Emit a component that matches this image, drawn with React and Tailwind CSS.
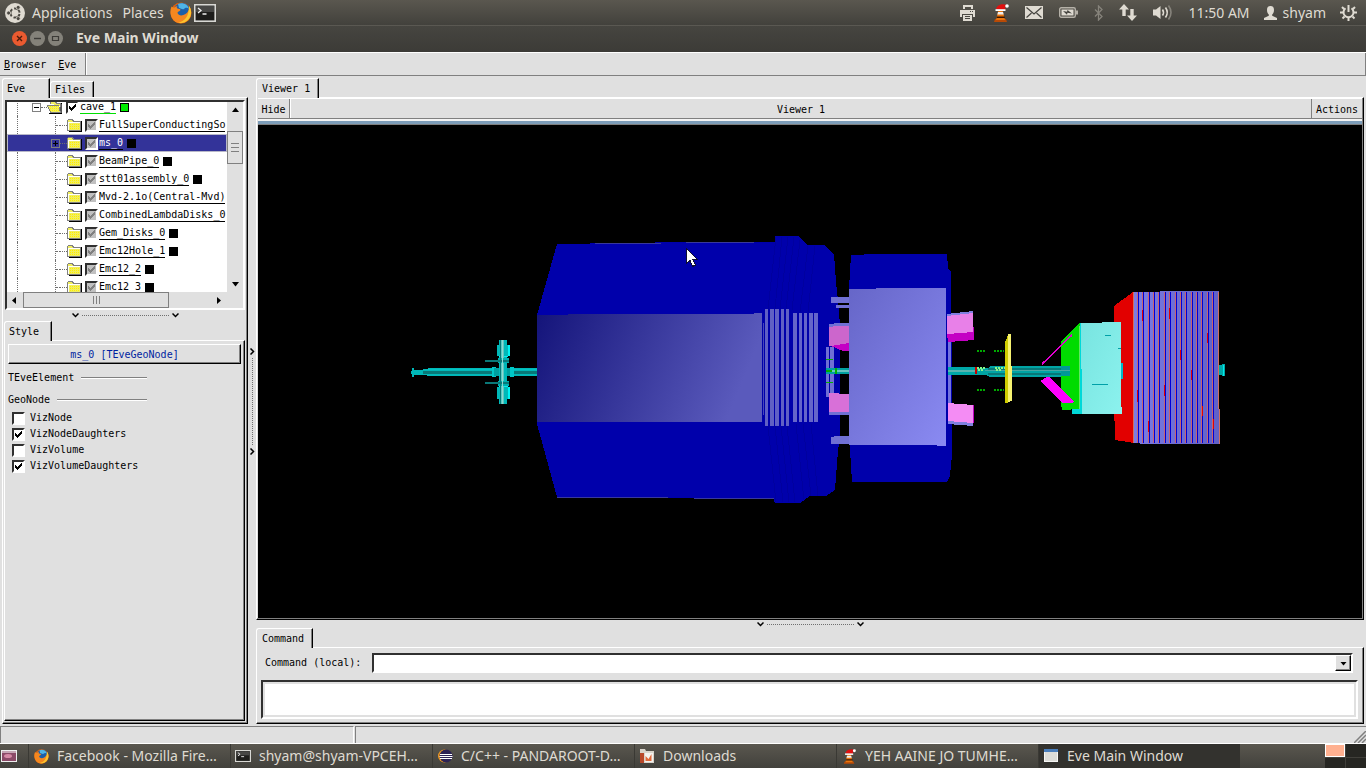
import React from 'react';
import clsx from 'clsx';

const RAISED = 'border border-t-white border-l-white border-r-black border-b-black shadow-[inset_-1px_-1px_0_#808080]';
const SUNKEN = 'border-2 border-t-[#303030] border-l-[#303030] border-r-white border-b-white';

const TREE_NODES = [
    { label: 'FullSuperConductingSo', swatch: false },
    { label: 'ms_0', swatch: true, selected: true },
    { label: 'BeamPipe_0', swatch: true },
    { label: 'stt01assembly_0', swatch: true },
    { label: 'Mvd-2.1o(Central-Mvd)', swatch: false },
    { label: 'CombinedLambdaDisks_0', swatch: false },
    { label: 'Gem_Disks_0', swatch: true },
    { label: 'Emc12Hole_1', swatch: true },
    { label: 'Emc12_2', swatch: true },
    { label: 'Emc12_3', swatch: true },
];

const VIZ_OPTIONS = [
    { label: 'VizNode', checked: false },
    { label: 'VizNodeDaughters', checked: true },
    { label: 'VizVolume', checked: false },
    { label: 'VizVolumeDaughters', checked: true },
];

/* ---------- desktop icons ---------- */

const UbuntuIcon = () => (
    <svg width="20" height="20" viewBox="0 0 20 20">
        <circle cx="10" cy="10" r="10" fill="#dfdbd2" />
        <circle cx="10" cy="10" r="4.6" fill="none" stroke="#4a4842" strokeWidth="2" strokeDasharray="7.6 2" strokeDashoffset="-1" />
        <g fill="#4a4842" stroke="#dfdbd2" strokeWidth="0.8">
            <circle cx="3.6" cy="10" r="2" />
            <circle cx="13.2" cy="4.4" r="2" />
            <circle cx="13.2" cy="15.6" r="2" />
        </g>
    </svg>
);

const FirefoxIcon = ({ size }) => (
    <svg width={size} height={size} viewBox="0 0 22 22">
        <circle cx="11" cy="11" r="10.5" fill="#e0600c" />
        <circle cx="12" cy="9" r="8" fill="#1d5fa8" />
        <path d="M8 2c4-2 10 0 11 5-2-2-4-1-5 0-2 1-3-1-5-1z" fill="#4fb4e6" />
        <path d="M1.5 4.5c1 1 2 1 3 1 1-1 2-1.5 3-1.5-1 1-1 2 0 2.5 1 .5 3 0 3 1.5-1 1.5-3 1.5-3 3 1 3 5 3 8 1 3-2 4-5 3.500-8 3 4 3 10-1 14-5 5-13 4-16-2C0 12 0 8 1.500 4.500z" fill="#f5871f" />
        <path d="M19 4c3 4 3 10-1 14-3 3-7 3.500-10 2.500 7-1 11-6 11-16.500z" fill="#fbc62f" />
    </svg>
);

const TerminalIcon = ({ className }) => (
    <svg className={className} viewBox="0 0 22 18" preserveAspectRatio="none">
        <rect x="0.8" y="0.8" width="20.4" height="16.4" fill="#1d1d1b" stroke="#d8d8d4" strokeWidth="1.6" />
        <rect x="2" y="2" width="18" height="6" fill="#474745" />
        <path d="M4 4l3 2.500-3 2.500M8.500 10h4" fill="none" stroke="#eee" strokeWidth="1.300" />
    </svg>
);

const VlcIcon = ({ width, height }) => (
    <svg width={width} height={height} viewBox="0 0 16 18">
        <path d="M2 15l-1 3h13l-1-3z" fill="#b84a06" />
        <path d="M5.500 6h4l2.500 10H3z" fill="#e8740e" />
        <path d="M5 8h5l.7 2.500H4.300z" fill="#eee" />
        <path d="M4 12.500h7.500l.5 1.500H3.500z" fill="#3b1600" />
        <path d="M3 5c1-4 6-6 11-4l-2 2 .5 3z" fill="#e01010" />
        <path d="M2.500 5.200h10v1.800h-10z" fill="#fff" />
        <circle cx="14" cy="2" r="1.800" fill="#fff" />
    </svg>
);

const PrinterIcon = () => (
    <svg width="18" height="16" viewBox="0 0 18 16" fill="#dfdbd2">
        <path d="M4 0h10v4h-2V2H6v2H4z" />
        <path d="M1 5h15v7h-2V9H3v3H1z" />
        <path d="M4 10h9v6H4zm2 1v1h5v-1zm0 2v1h5v-1z" fillRule="evenodd" />
        <path d="M11 6h1v1h-1zM13 6h1v1h-1z" fill="#45443f" />
    </svg>
);

const MailIcon = () => (
    <svg width="18" height="13" viewBox="0 0 18 13">
        <rect width="18" height="13" fill="#dfdbd2" />
        <path d="M1.500 1.500L9 8l7.500-6.500M1.500 11.500L6.500 7M16.500 11.500L11.500 7" fill="none" stroke="#45443f" strokeWidth="1.200" />
    </svg>
);

const BatteryIcon = () => (
    <svg width="19" height="11" viewBox="0 0 19 11">
        <rect x="0.700" y="0.700" width="15.600" height="9.600" rx="1.500" fill="none" stroke="#b5b1a8" strokeWidth="1.400" />
        <rect x="2.500" y="2.500" width="12" height="6" fill="#dfdbd2" />
        <path d="M17 3.500h2v4h-2z" fill="#b5b1a8" />
        <path d="M4 4l4 .8L8.500 3l4.500 3.500-4.500-.8-.5 2z" fill="#45443f" />
    </svg>
);

const BluetoothIcon = () => (
    <svg width="9" height="16" viewBox="0 0 9 16" fill="none" stroke="#86837b" strokeWidth="1.300">
        <path d="M1 4.500l7 7L4.500 15V1L8 4.500l-7 7" />
    </svg>
);

const NetworkIcon = () => (
    <svg width="18" height="17" viewBox="0 0 18 17" fill="#dfdbd2">
        <path d="M5 0l5 5.500H6.700V12H3.300V5.500H0z" />
        <path d="M13 17l-5-5.500h3.300V5h3.400v6.500H18z" />
    </svg>
);

const VolumeIcon = () => (
    <svg width="20" height="17" viewBox="0 0 20 17" fill="none" strokeWidth="1.600">
        <path d="M0 5.500h3L7.500 2v13L3 11.500H0z" fill="#dfdbd2" />
        <path d="M9.500 5.500q2 3 0 6" stroke="#dfdbd2" />
        <path d="M12.500 3.500q3.500 5 0 10" stroke="#dfdbd2" />
        <path d="M15.500 1.500q5 7 0 14" stroke="#86837b" />
    </svg>
);

const UserIcon = () => (
    <svg width="13" height="14" viewBox="0 0 13 14" fill="#dfdbd2">
        <path d="M6.500 0C9 0 10 1.500 10 4c0 2-.8 3.500-1.800 4.500v1.200L13 12v2H0v-2l4.800-2.300V8.500C3.800 7.500 3 6 3 4c0-2.500 1-4 3.500-4z" />
    </svg>
);

const PowerIcon = () => (
    <svg width="17" height="17" viewBox="0 0 17 17" fill="none" stroke="#dfdbd2">
        <path d="M5.500 4.300a5 5 0 1 0 6 0" strokeWidth="2" />
        <path d="M8.500 1v7" strokeWidth="2" />
        <path d="M2 3l2 2M15 3l-2 2M0 8.500h3M17 8.500h-3M2.500 14.500l2-2M14.500 14.500l-2-2M8.500 14v3" strokeWidth="2" />
    </svg>
);

const EclipseIcon = () => (
    <svg width="15" height="14" viewBox="0 0 15 14">
        <circle cx="6.500" cy="7" r="6.500" fill="#f29a1f" />
        <circle cx="8" cy="7" r="6.500" fill="#2c2255" />
        <path d="M2 5.500h12M1.500 7.500h13M2 9.500h12" stroke="#fff" />
    </svg>
);

const FilesIcon = () => (
    <svg width="16" height="16" viewBox="0 0 16 16">
        <path d="M1 1h5l1 2h8v12H1z" fill="#d9d4cb" />
        <path d="M1 5h4v10H1z" fill="#b8482a" />
        <path d="M6 5h8v9H6z" fill="#f4f2ee" />
        <path d="M6.500 13V8l3 3 3-5v7z" fill="#e0693a" />
    </svg>
);

const WindowIcon = () => (
    <svg width="14" height="14" viewBox="0 0 14 14">
        <rect x="0.500" y="0.500" width="13" height="12" fill="#dcdcd8" stroke="#f6f6f4" />
        <path d="M0 0h14v3H0z" fill="#4a7ebb" />
    </svg>
);

const DesktopIcon = () => (
    <svg width="16" height="12" viewBox="0 0 16 12">
        <rect x="0.500" y="0.500" width="15" height="11" fill="#8c4a68" stroke="#eee" />
        <path d="M1 2h14" stroke="#fff" />
        <ellipse cx="7" cy="6" rx="4" ry="2" fill="#d68aa6" />
    </svg>
);

/* ---------- toolkit widgets ---------- */

const Folder = ({ open }) => (
    <svg width="16" height="14" viewBox="0 0 16 14" shapeRendering="crispEdges" className="shrink-0">
        <path d="M2 14h13V3h-1v10H2z" fill="#000" />
        {open && <path d="M13 4h2v9h-2z" fill="#555" />}
        <path d={open ? 'M3.500 3.500v-2h5l1 2h4v3' : 'M.5 12.500v-10l1-1h4l1 2h7v9z'} fill="#f0ee60" stroke="#808080" />
        {open && <path d="M.5 5.500h11l2 7h-10z" fill="#f0ee60" stroke="#808080" />}
        <path d="M3 6h9M3 8h9M3 10h9" stroke="#ffee00" strokeDasharray="1 1" />
        {!open && <path d="M1.500 12V4.500H13" fill="none" stroke="#fff" />}
    </svg>
);

const TickBox = ({ checked, muted, label }) => (
    <span className="grid shrink-0">
        <input
            type="checkbox"
            aria-label={label}
            defaultChecked={checked}
            className={clsx('peer appearance-none col-start-1 row-start-1 size-[13px]', SUNKEN, muted ? 'bg-[#c0c0c0]' : 'bg-white')}
        />
        <svg
            viewBox="0 0 13 13"
            shapeRendering="crispEdges"
            className="invisible peer-checked:visible pointer-events-none col-start-1 row-start-1 size-[13px]"
        >
            <path d="M3 5h1v1h1v1h1v-1h1v-1h1v-1h1v-1h1v3h-1v1h-1v1h-1v1h-1v1h-1v-1h-1v-1h-1z" fill={muted ? '#808080' : '#000'} />
        </svg>
    </span>
);

const Chevron = ({ right }) => (
    <svg width="7" height="7" viewBox="0 0 7 7" className="shrink-0">
        <path d={right ? 'M1.500 0.500l3 3-3 3' : 'M0.500 1.500l3 3 3-3'} fill="none" stroke="#000" strokeWidth="1.500" />
    </svg>
);

const Splitter = ({ className }) => (
    <div className={clsx('flex items-center justify-center gap-[3px] shrink-0', className)}>
        <Chevron />
        <span className="w-[87px] border-t border-dotted border-[#707070]" />
        <Chevron />
    </div>
);

const Tab = ({ children, active, className }) => (
    <button
        type="button"
        className={clsx(
            'flex items-center bg-[#e0e0e0] border-t border-l border-white border-r border-r-black rounded-tl-[3px] shadow-[inset_-1px_0_0_#808080]',
            active ? 'h-5 -mb-px z-10' : 'h-4',
            className
        )}
    >
        {children}
    </button>
);

const ArrowGlyph = ({ d }) => (
    <svg width="7" height="7" viewBox="0 0 7 7" className="shrink-0">
        <path d={d} fill="#000" />
    </svg>
);

const Expander = ({ plus }) => (
    <svg width="9" height="9" viewBox="0 0 9 9" shapeRendering="crispEdges" className="shrink-0">
        <rect x="0.500" y="0.500" width="8" height="8" fill={plus ? '#333399' : '#fff'} stroke="#808080" />
        <path d={plus ? 'M2 4h5v1H2zM4 2h1v5H4z' : 'M2 4h5v1H2z'} fill="#000" />
    </svg>
);

const TreeRow = ({ node }) => (
    <li className={clsx('flex items-center h-[18px]', node.selected && 'bg-[#333399] text-white outline outline-[#b8b8c8] -outline-offset-1')}>
        <span className={clsx('ml-[10px] w-[34px] h-full shrink-0', !node.selected && 'border-l border-dotted border-[#707070]')} />
        {node.selected ? (
            <Expander plus />
        ) : (
            <span className="ml-1 w-[5px] h-full shrink-0 flex items-center border-l border-dotted border-[#707070]">
                <span className="w-full border-t border-dotted border-[#707070]" />
            </span>
        )}
        <span className="w-[7px] shrink-0 border-t border-dotted border-[#707070]" />
        <Folder />
        <label className="flex items-center ml-[2px] gap-px">
            <TickBox checked muted label={node.label} />
            <span className="pt-px border-b border-black whitespace-nowrap">{node.label}</span>
        </label>
        {node.swatch && <span className="size-[9px] ml-1 bg-black shrink-0" />}
    </li>
);

const GeometryTree = () => (
    <div className={clsx('mt-[2px] mx-[2px] bg-[#e0e0e0]', SUNKEN)}>
        <div className="flex h-[190px]">
            <ul className="flex-1 min-w-0 overflow-hidden bg-white">
                <li className="flex items-center h-[18px] -mt-1">
                    <span className="ml-[10px] w-[15px] h-full border-l border-dotted border-[#707070]" />
                    <Expander />
                    <span className="w-[6px] border-t border-dotted border-[#707070]" />
                    <Folder open />
                    <label className="flex items-center ml-[3px] gap-px">
                        <TickBox checked label="cave_1" />
                        <span className="pt-px border-b border-[#00e000]">cave_1</span>
                    </label>
                    <span className="size-[9px] ml-1 bg-[#00ee00] border border-black" />
                </li>
                {TREE_NODES.map((node) => (
                    <TreeRow key={node.label} node={node} />
                ))}
            </ul>
            <div className="w-4 flex flex-col items-center pt-1 pb-1">
                <ArrowGlyph d="M3.500 1.500L7 6H0z" />
                <div className="mt-[18px] w-full h-[33px] border border-[#808080] flex flex-col items-center justify-center gap-[3px]">
                    <span className="w-2 h-px bg-[#808080]" />
                    <span className="w-2 h-px bg-[#808080]" />
                    <span className="w-2 h-px bg-[#808080]" />
                </div>
                <span className="flex-1" />
                <ArrowGlyph d="M3.500 5.500L7 1H0z" />
            </div>
        </div>
        <div className="flex items-center h-4 pl-1">
            <ArrowGlyph d="M1 3.500L5 0v7z" />
            <div className="ml-[5px] w-[146px] h-full border border-[#808080] flex items-center justify-center gap-[2px]">
                <span className="w-px h-2 bg-[#808080]" />
                <span className="w-px h-2 bg-[#808080]" />
                <span className="w-px h-2 bg-[#808080]" />
            </div>
            <span className="w-[46px]" />
            <ArrowGlyph d="M6 3.500L2 0v7z" />
        </div>
    </div>
);

const GroupTitle = ({ children }) => (
    <div className="flex items-center gap-[7px] w-[139px] h-5">
        <span>{children}</span>
        <span className="flex-1 h-[2px] bg-[#808080] border-b border-white" />
    </div>
);

const StylePanel = () => (
    <div className={clsx('flex-1 ml-px mr-[2px] mb-[2px] px-[3px] pt-[3px]', RAISED)}>
        <button type="button" className={clsx('w-full h-5 pt-px text-center text-[#001fa0]', RAISED)}>ms_0 [TEveGeoNode]</button>
        <div className="flex flex-col gap-[2px] pt-1">
            <GroupTitle>TEveElement</GroupTitle>
            <GroupTitle>GeoNode</GroupTitle>
        </div>
        <div className="pl-1">
            {VIZ_OPTIONS.map((opt) => (
                <label key={opt.label} className="flex items-center gap-[5px] h-4 w-fit">
                    <TickBox checked={opt.checked} label={opt.label} />
                    {opt.label}
                </label>
            ))}
        </div>
    </div>
);

/* ---------- detector view ---------- */

const BARREL_STRIPES = [[765, 3], [770, 4], [775, 4], [781, 3], [786, 3]];
const ENDCAP_STRIPES = [[793, 4], [799, 3], [804, 3], [809, 4], [814, 4]];
const IRON_LAYERS = [1138, 1143, 1149, 1154, 1159, 1165, 1170, 1176, 1181, 1186, 1192, 1197, 1202, 1208, 1213];
const HOT_CELLS = [[1137, 390, 12], [1142, 310, 11], [1148, 421, 11], [1164, 385, 11], [1169, 308, 11], [1180, 350, 10], [1191, 370, 10], [1202, 406, 10], [1207, 333, 10], [1213, 419, 10]];

const DetectorView = () => (
    <svg viewBox="258 125 1104 493" className="block w-full h-full bg-black" shapeRendering="crispEdges">
        <defs>
            <linearGradient id="barrel" x1="0" y1="0" x2="1" y2="0.200">
                <stop offset="0" stopColor="#14147a" />
                <stop offset="1" stopColor="#5a5abc" />
            </linearGradient>
            <linearGradient id="dipole" x1="0" y1="0" x2="1" y2="1">
                <stop offset="0" stopColor="#6666c8" />
                <stop offset="1" stopColor="#8a8af2" />
            </linearGradient>
            <linearGradient id="muon" x1="0" y1="0" x2="1" y2="0">
                <stop offset="0" stopColor="#7c7ce4" />
                <stop offset="1" stopColor="#6060c6" />
            </linearGradient>
            <linearGradient id="calo" x1="0" y1="0" x2="1" y2="1">
                <stop offset="0" stopColor="#78e4e0" />
                <stop offset="1" stopColor="#8cf2ee" />
            </linearGradient>
        </defs>

        {/* upstream pipe and target cross */}
        <path d="M411 371h1v-3h2v2h9v-1h5v-1h109v8H427v-1h-13v2h-2v-3h-1z" fill="#00b8b8" />
        <path d="M423 371h114v3H423z" fill="#087878" />
        <path d="M428 369h109v1H428z" fill="#00c4c4" />
        <path d="M492 367h4v10h-4zM510 367h4v10h-4z" fill="#00c8c8" />
        <path d="M494 368h16v8h-16z" fill="#00a0a0" />
        <path d="M499 340h8v64h-8z" fill="#00b8b8" />
        <path d="M497 345h13v11h-13zM497 387h13v12h-13z" fill="#00b8b8" />
        <path d="M508 345h2v11h-2zM508 387h2v12h-2zM499 356h9v1h-9zM499 386h9v1h-9z" fill="#00f4f4" />
        <path d="M501 340h3v64h-3z" fill="#58c8c4" />
        <path d="M498 358h11v5h-11zM498 381h11v5h-11z" fill="#00b0b0" />
        <path d="M485 360h24v2h-24zM485 382h24v2h-24zM500 340h1v64h-1z" fill="#0a7878" />
        <path d="M502 340h1v64h-1z" fill="#90d8d0" />

        {/* barrel */}
        <path d="M557 244L687 242H775V236H799L807 245H824L834 254L836 282L838 300L840 325V440L838 450L835 490L826 496H810L800 503H775L773 498L557 497L537 424V315z" fill="#0000ab" />
        <path d="M595 243h66v1h-66zM686 242h68v1h-68zM557 497h111v1H557zM694 498h80v1h-80z" fill="#38389c" />
        <path d="M776 237l-8 72M782 237l-7 72M788 237l-8 72M794 237l-8 72M800 240l-8 70M808 246l-8 66M815 246l-7 66M768 426l8 76M775 426l8 76M781 426l8 76M787 426l8 76M796 424l8 76M803 424l8 72M811 424l7 72" stroke="#00009f" fill="none" />
        <path d="M537 315L598 314H754V313H762V422H537z" fill="url(#barrel)" />
        <path d="M763 323h1v92h-1z" fill="#4848b8" />
        {BARREL_STRIPES.map(([x, w]) => <rect key={x} x={x} y="309" width={w} height="117" fill="#6060c4" />)}
        {ENDCAP_STRIPES.map(([x, w]) => <rect key={x} x={x} y="313" width={w} height="109" fill="#6565ca" />)}

        {/* links between barrel and dipole */}
        <path d="M831 297h18v6h-18zM836 305h13v3h-13zM829 324l10-1h10v4h-20zM826 347h3v50h-3zM830 347h4v50h-4zM829 412h20v3h-20zM831 437l5-1h13v8h-18z" fill="#7070d4" />
        <path d="M829 327l8-1h12v18l-12 2h-8z" fill="#cc66cc" />
        <path d="M831 346l18-3v8h-6z" fill="#c400c4" />
        <path d="M829 393l20 1v18h-20z" fill="#d870d8" />
        <path d="M826 368h23v6h-23z" fill="#00a0a0" />
        <path d="M832 370h17v2h-17z" fill="#68c4c0" />
        <path d="M826 359h7v1h-7zM826 382h7v1h-7zM826 370h6v2h-6zM835 368h2v6h-2z" fill="#00b000" />

        {/* dipole */}
        <path d="M851 255L876 254H947L948 268L951 272V306L952 320V455L951 465L950 476L947 482H852L850 450L849 289z" fill="#0000ab" />
        <path d="M849 289L903 288H946V446H937V445H849z" fill="url(#dipole)" />
        <path d="M948 342h3v62h-3z" fill="#7474dc" />
        <path d="M947 314l26-3v4l-26 2zM948 421l25 2v3l-25-2z" fill="#8080e0" />
        <path d="M947 316l26-3v19l-26 2z" fill="#e880e8" />
        <path d="M947 334l26-2 1-10v18l-26 2z" fill="#c400c4" />
        <path d="M948 403l25 2v18l-25-2z" fill="#f48cf4" />
        <path d="M973 405h1v18h-1z" fill="#c400c4" />

        {/* downstream pipe and trackers */}
        <path d="M948 367h28v8h-28z" fill="#00a8a8" />
        <path d="M948 370h28v2h-28z" fill="#58b4b0" />
        <path d="M976 368h12l2-2h80v11h-80l-4-2h-10z" fill="#00a4a4" />
        <path d="M988 368h82v2h-82zM988 373h82v2h-82z" fill="#087878" />
        <path d="M985 370h85v1h-85z" fill="#48a8a4" />
        <path d="M975 367h2v7h-2z" fill="#d00000" />
        <path d="M977 368h9M995 368h11M978 370h6M996 370h5" stroke="#88f888" strokeWidth="2" strokeDasharray="2 1" />
        <path d="M977 351h9M994 351h10M977 390h9M994 390h10" stroke="#00a800" strokeWidth="2" strokeDasharray="2 1" />
        <path d="M1006 340l2-5v67l-1 1h-2v-60z" fill="#d0cc00" />
        <path d="M1008 334h3v32h1v35l-4 1z" fill="#f6f270" />

        {/* forward calorimeter */}
        <path d="M1133 292L1114 306V400L1115 440L1128 442L1133 443z" fill="#e20000" />
        <path d="M1121 363h2v16h-2z" fill="#00b8c8" />
        <path d="M1080 323L1061 341V403L1062 410L1080 409z" fill="#00dc00" />
        <path d="M1079 326h2v83h-2z" fill="#60e860" />
        <path d="M1080 323h2v91h-10v-5h8z" fill="#00d8d8" />
        <path d="M1081 323H1102V322H1121V407H1122V414H1082z" fill="url(#calo)" />
        <path d="M1105 335h6v1h-6zM1118 348h3v1h-3zM1092 384h16v1h-16z" fill="#00a0a8" />
        <path d="M1061 366h9v10h-9z" fill="#009898" />
        <path d="M1061 370h9v1h-9z" fill="#48a8a4" />
        <path d="M1042 364L1072 335" stroke="#e000d0" strokeWidth="1.500" />
        <path d="M1040 381L1047 377H1050L1074 402L1072 403H1062z" fill="#ff00ff" />

        {/* muon range system */}
        <path d="M1219 365h3v-1h3v12h-3v-1h-3z" fill="#00a8a8" />
        <path d="M1223 365h1v11h-1z" fill="#00eaea" />
        <path d="M1133 292H1160V291H1219V409H1220V444H1140V443H1133z" fill="url(#muon)" />
        {IRON_LAYERS.map((x) => (
            <g key={x}>
                <rect x={x - 1} y="292" width="1" height="151" fill="#c86470" />
                <rect x={x} y="292" width="1" height="151" fill="#0000d8" />
            </g>
        ))}
        <path d="M1133 292h1v151h-1zM1218 292h1v117h-1zM1219 409h1v35h-1z" fill="#d07060" />
        {HOT_CELLS.map(([x, y, h]) => <rect key={x} x={x} y={y} width="1" height={h} fill="#e20000" />)}

        {/* pointer */}
        <path d="M686.500 248.500v15l3.500-3 2.500 6 3-1.500-2.500-5.500h4.500z" fill="#fff" stroke="#101030" />
    </svg>
);

/* ---------- frame ---------- */

const TaskButton = ({ icon, children, active }) => (
    <button
        type="button"
        className={clsx(
            'flex items-center gap-2 w-[202px] h-full pl-1 border-l border-[#3a3934] text-left whitespace-nowrap overflow-hidden',
            active && 'bg-[#33322e]'
        )}
    >
        <span className="w-4 shrink-0 flex justify-center">{icon}</span>
        {children}
    </button>
);

const DesktopPanel = () => (
    <header className="flex items-center h-[25px] shrink-0 pl-[5px] pr-[9px] bg-linear-to-b from-[#5a574f] to-[#42413c] text-[14px] leading-5 text-[#dfdbd2] font-['Noto_Sans',sans-serif]">
        <UbuntuIcon />
        <button type="button" className="ml-[7px]">Applications</button>
        <button type="button" className="ml-[10px] mr-[6px]">Places</button>
        <FirefoxIcon size={22} />
        <TerminalIcon className="w-[22px] h-[18px] ml-[2px]" />
        <div className="flex items-center gap-[15px] ml-auto">
            <div className="flex items-center gap-4">
                <PrinterIcon />
                <VlcIcon width={16} height={18} />
                <MailIcon />
                <BatteryIcon />
                <BluetoothIcon />
                <NetworkIcon />
                <VolumeIcon />
            </div>
            <div className="flex items-center gap-[14px]">
                <span>11:50 AM</span>
                <span className="flex items-center gap-[6px]"><UserIcon />shyam</span>
                <PowerIcon />
            </div>
        </div>
    </header>
);

const TitleBar = () => (
    <div className="flex items-center gap-[3px] h-[27px] shrink-0 pl-3 pb-[2px] border-t border-[#5a5852] bg-linear-to-b from-[#464540] to-[#3c3b37]">
        <button type="button" aria-label="Close" className="size-[15px] rounded-full bg-[#ea5a30]">
            <svg viewBox="0 0 15 15"><path d="M5 5l5 5M10 5l-5 5" stroke="#4a1c0c" strokeWidth="1.400" /></svg>
        </button>
        <button type="button" aria-label="Minimize" className="size-[15px] rounded-full bg-[#84827a]">
            <svg viewBox="0 0 15 15"><path d="M4 7.500h7" stroke="#3c3b37" strokeWidth="1.400" /></svg>
        </button>
        <button type="button" aria-label="Maximize" className="size-[15px] rounded-full bg-[#84827a]">
            <svg viewBox="0 0 15 15"><path d="M4.500 5.500h6v4h-6z" fill="none" stroke="#3c3b37" strokeWidth="1.200" /></svg>
        </button>
        <h1 className="ml-[10px] text-[14px] leading-5 font-bold text-[#dfdbd2] font-['Noto_Sans',sans-serif]">Eve Main Window</h1>
    </div>
);

const Taskbar = () => (
    <footer className="flex items-center h-6 shrink-0 bg-linear-to-b from-[#5a574f] to-[#42413c] text-[14px] leading-5 text-[#dfdbd2] font-['Noto_Sans',sans-serif]">
        <button type="button" aria-label="Show desktop" className="w-7 pl-px"><DesktopIcon /></button>
        <TaskButton icon={<FirefoxIcon size={15} />}>Facebook - Mozilla Fire…</TaskButton>
        <TaskButton icon={<TerminalIcon className="w-4 h-3" />}>shyam@shyam-VPCEH…</TaskButton>
        <TaskButton icon={<EclipseIcon />}>C/C++ - PANDAROOT-D…</TaskButton>
        <TaskButton icon={<FilesIcon />}>Downloads</TaskButton>
        <TaskButton icon={<VlcIcon width={13} height={15} />}>YEH AAINE JO TUMHE…</TaskButton>
        <TaskButton icon={<WindowIcon />} active>Eve Main Window</TaskButton>
        <div className="grid grid-cols-2 gap-px w-[41px] h-full ml-auto bg-[#403f3a]">
            <span className="bg-[#ffb090] border border-white" />
            <span className="bg-[#262622]" />
            <span className="bg-[#262622]" />
            <span className="bg-[#262622]" />
        </div>
    </footer>
);

const CommandPanel = () => (
    <>
        <div className="flex"><Tab active className="w-[57px] pl-[5px]">Command</Tab></div>
        <div className={clsx('h-[77px] shrink-0 pl-1 pr-[5px] pt-[5px]', RAISED)}>
            <label className="flex items-center pl-1 pr-[5px]">
                <span className="w-[107px]">Command (local):</span>
                <span className={clsx('flex flex-1 h-5 bg-white', SUNKEN)}>
                    <input type="text" className="flex-1 min-w-0 px-1 outline-none" />
                    <button type="button" aria-label="History" className={clsx('w-4 flex items-center justify-center bg-[#e0e0e0]', RAISED)}>
                        <ArrowGlyph d="M3.500 5.500L6.500 2h-6z" />
                    </button>
                </span>
            </label>
            <textarea aria-label="Output" className={clsx('block w-full h-[39px] mt-[7px] resize-none outline-none bg-white bg-clip-content p-[2px]', SUNKEN)} />
        </div>
    </>
);

export default function App() {
    return (
        <div className="flex flex-col h-screen bg-[#e0e0e0] text-black text-[10px] leading-3 font-['DejaVu_Sans_Mono',monospace]">
            <DesktopPanel />
            <TitleBar />

            <nav className="flex h-6 shrink-0 border-t border-t-white border-b border-b-[#808080]">
                <div className="flex items-center gap-3 w-[86px] pl-1 pt-[2px] border-r border-[#808080]">
                    <button type="button"><u>B</u>rowser</button>
                    <button type="button"><u>E</u>ve</button>
                </div>
                <div className="flex-1 border-l border-l-white border-r border-r-[#808080]" />
            </nav>

            <main className="flex flex-1 min-h-0 px-[2px] pt-[2px] pb-[2px]">
                <aside className="flex flex-col w-[246px] shrink-0">
                    <div className="flex items-end">
                        <Tab active className="w-12 pl-1">Eve</Tab>
                        <Tab className="w-11 pl-1">Files</Tab>
                    </div>
                    <div className={clsx('flex flex-col flex-1 min-h-0', RAISED)}>
                        <GeometryTree />
                        <Splitter className="h-[11px]" />
                        <div className="flex pl-px"><Tab active className="w-12 pl-1">Style</Tab></div>
                        <StylePanel />
                    </div>
                </aside>

                <div className="flex flex-col items-center justify-center gap-[3px] w-2 shrink-0">
                    <Chevron right />
                    <span className="h-[87px] border-l border-dotted border-[#707070]" />
                    <Chevron right />
                </div>

                <section className="flex flex-col flex-1 min-w-0">
                    <div className="flex"><Tab active className="w-[63px] pl-[5px]">Viewer 1</Tab></div>
                    <div className={clsx('flex flex-col flex-1 min-h-0 pl-px pr-px pb-px', RAISED)}>
                        <div className="flex items-stretch h-[21px] shrink-0 border-t border-t-white border-b border-b-[#808080]">
                            <button type="button" className="w-8 pt-[2px] border-r border-[#808080] text-center">Hide</button>
                            <div className="flex-1 flex items-center justify-center pt-[2px] border-l border-white">
                                <span>Viewer 1</span>
                            </div>
                            <button type="button" className="w-[51px] pt-[2px] border-l border-[#808080] text-center">Actions</button>
                        </div>
                        <div className="h-[6px] shrink-0 border-t-2 border-t-[#f4f4f4] border-b border-b-[#808080] bg-[#7d9db9]" />
                        <div className="flex-1 min-h-0"><DetectorView /></div>
                    </div>
                    <Splitter className="h-2" />
                    <CommandPanel />
                </section>
            </main>

            <div className="flex gap-px h-[18px] shrink-0 border-b border-white">
                <div className="w-[354px] border-t border-l border-[#808080] border-r border-r-white" />
                <div className="flex flex-1 justify-end items-end border-t border-l border-[#808080]">
                    <svg width="12" height="12" viewBox="0 0 12 12">
                        <path d="M0 12L12 0M4 12l8-8M8 12l4-4" stroke="#808080" strokeWidth="1.500" />
                    </svg>
                </div>
            </div>

            <Taskbar />
        </div>
    );
}
